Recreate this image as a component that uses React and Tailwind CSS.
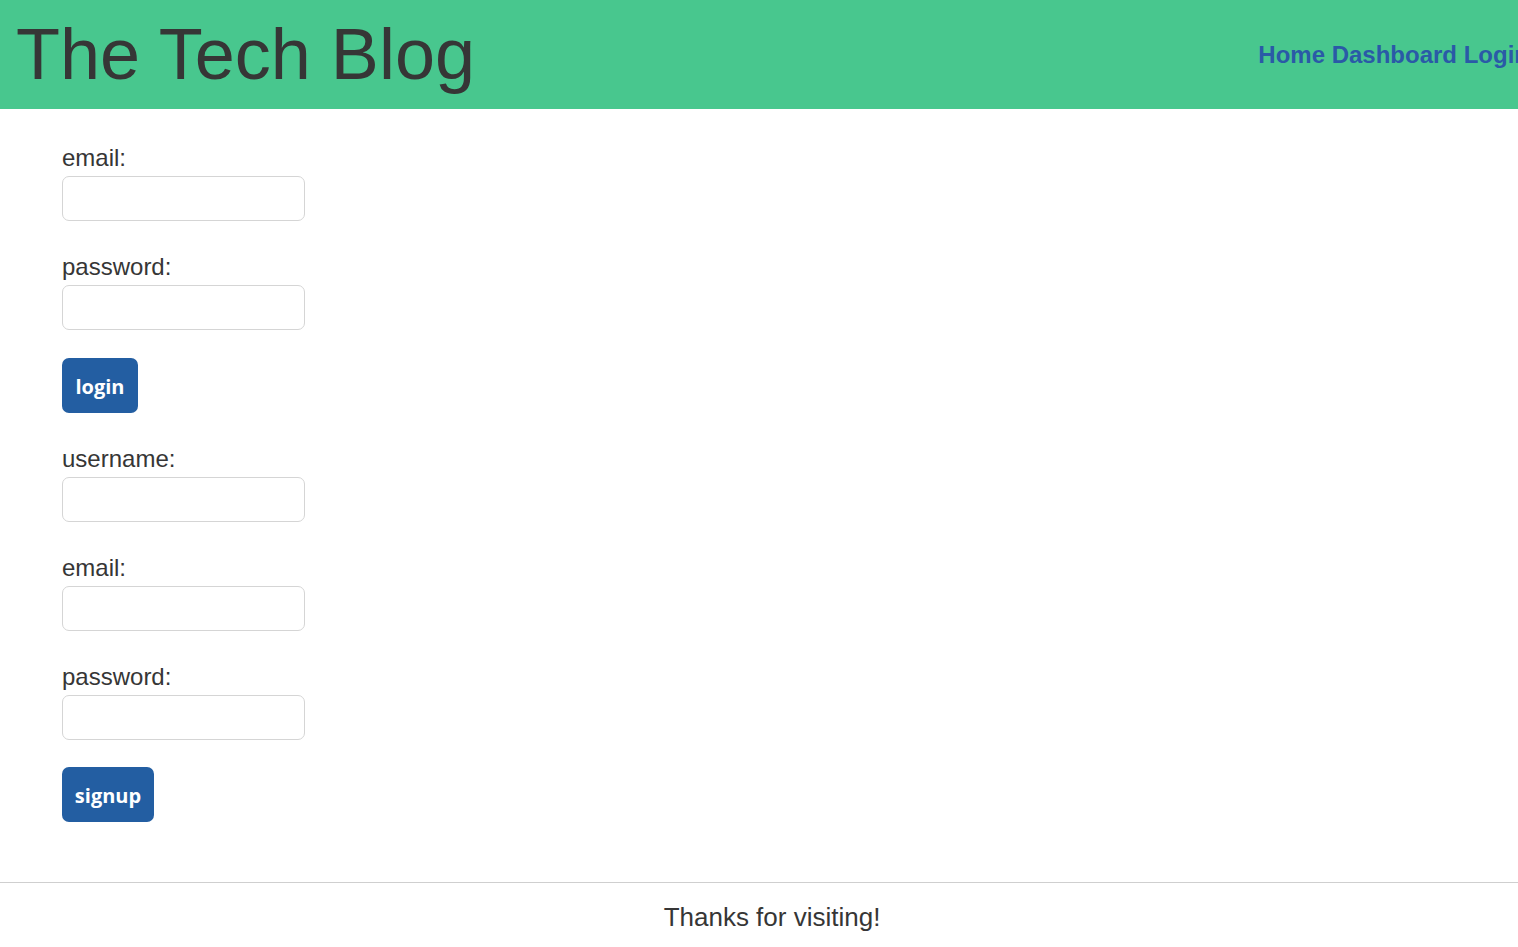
import React from 'react';

const Field = ({ label, type = 'text', gap = 'mb-8' }) => (
  <div className={gap}>
    <label className="block text-[24px] leading-[28px]">{label}</label>
    <input
      type={type}
      className="mt-1 block w-[243px] h-[45px] border border-[#d5d5d5] rounded-[7px] bg-white px-3 outline-none"
    />
  </div>
);

const SubmitButton = ({ children, width }) => (
  <button
    type="submit"
    className={`${width} h-[55px] bg-[#235ea2] text-white rounded-[7px] text-[20px] font-bold font-['Open_Sans',sans-serif] flex items-center justify-center pt-[2px]`}
  >
    {children}
  </button>
);

const App = () => {
  return (
    <div className="w-full min-h-screen overflow-x-hidden bg-white text-[#363636] font-['Liberation_Sans',Arial,sans-serif]">
      <div className="w-[1544px]">
        {/* Header */}
        <header className="h-[109px] bg-[#48c78e] flex items-center pl-4">
          <h1 className="text-[72px] leading-none pb-[2px]">The Tech Blog</h1>
          <nav className="ml-auto mr-[15px] whitespace-nowrap text-[24px] font-bold text-[#2a5aa7]">
            <a href="#">Home</a> <a href="#">Dashboard</a> <a href="#">Login</a>
          </nav>
        </header>

        {/* Forms */}
        <main className="pl-[62px] pt-[35px] pb-[60px]">
          <form onSubmit={(e) => e.preventDefault()} className="mb-8">
            <Field label="email:" type="email" />
            <Field label="password:" type="password" gap="mb-[28px]" />
            <SubmitButton width="w-[76px]">login</SubmitButton>
          </form>

          <form onSubmit={(e) => e.preventDefault()}>
            <Field label="username:" />
            <Field label="email:" type="email" />
            <Field label="password:" type="password" gap="mb-[27px]" />
            <SubmitButton width="w-[92px]">signup</SubmitButton>
          </form>
        </main>

        {/* Footer */}
        <footer className="border-t border-[#cfcfcf] pt-[19px] pb-3 text-center text-[26px] leading-[30px]">
          Thanks for visiting!
        </footer>
      </div>
    </div>
  );
};

export default App;
